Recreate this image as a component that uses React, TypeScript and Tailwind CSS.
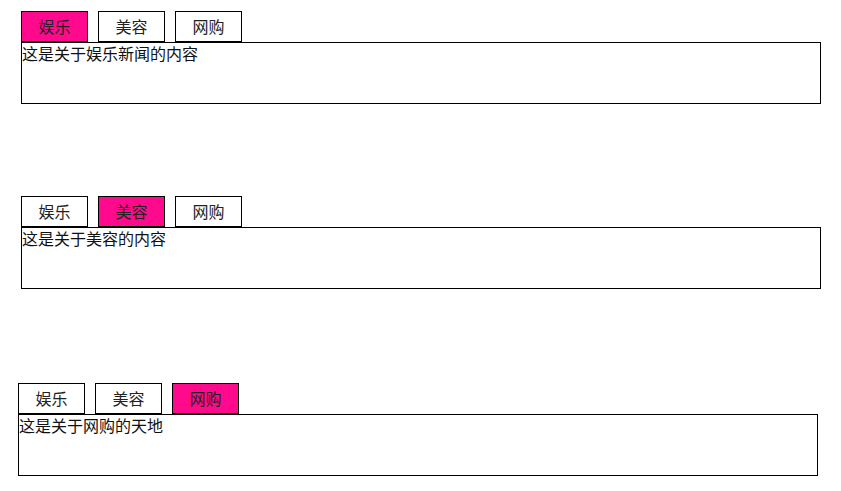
import { useState } from 'react';

// Pestañas simples con contenido
interface TabGroupProps {
  initial: number;
  contents: string[];
  className?: string;
}

const titles = ['娱乐', '美容', '网购'];

function TabGroup({ initial, contents, className = '' }: TabGroupProps) {
  const [active, setActive] = useState(initial);

  return (
    <div className={`w-[800px] ${className}`}>
      <div className="flex gap-[10px]">
        {titles.map((t, i) => (
          <button
            key={t}
            type="button"
            onClick={() => setActive(i)}
            className={`h-[31px] w-[67px] border border-black text-[16px] leading-[29px] text-[#222] ${
              i === active ? 'bg-[#ff0a8c] text-[#4a2a3c]' : 'bg-white'
            }`}
          >
            {t}
          </button>
        ))}
      </div>
      <div className="h-[62px] border border-black text-[16px] leading-[20px] text-[#111]">
        {contents[active]}
      </div>
    </div>
  );
}

const contents = ['这是关于娱乐新闻的内容', '这是关于美容的内容', '这是关于网购的天地'];

export default function App() {
  return (
    <div
      className="min-h-[491px] bg-white pt-[11px]"
      style={{ fontFamily: '"Noto Sans CJK SC", "Noto Sans", sans-serif' }}
    >
      <TabGroup initial={0} contents={contents} className="ml-[21px]" />
      <TabGroup initial={1} contents={contents} className="ml-[21px] mt-[92px]" />
      <TabGroup initial={2} contents={contents} className="ml-[18px] mt-[94px]" />
    </div>
  );
}
